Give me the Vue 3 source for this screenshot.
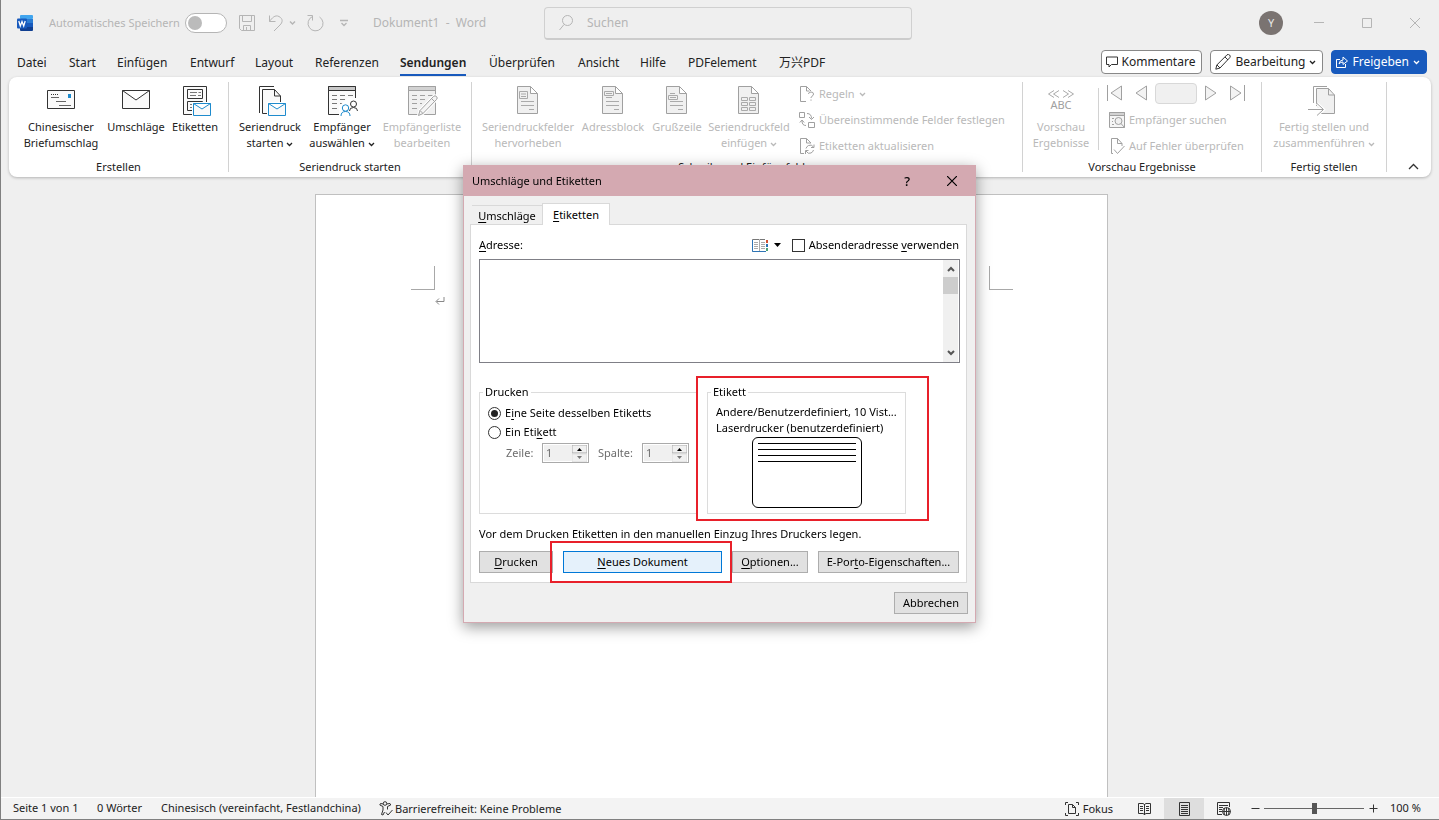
<script setup>
import { ref } from 'vue'

const tabs = ['Datei', 'Start', 'Einfügen', 'Entwurf', 'Layout', 'Referenzen', 'Sendungen', 'Überprüfen', 'Ansicht', 'Hilfe', 'PDFelement', '万兴PDF']
const active = ref('Sendungen')
const mode = ref('page')
const zoom = ref(50)
const address = ref('')
</script>

<template>
  <div class="window">
    <header class="titlebar">
      <div class="title-left">
        <svg class="logo" width="16" height="16" viewBox="0 0 16 16">
          <rect x="3" width="13" height="4" rx="1" fill="#41a5ee" />
          <path d="M3 4h13v4H3z" fill="#2b7cd3" />
          <path d="M3 8h13v4H3z" fill="#185abd" />
          <path d="M3 12h13v3a1 1 0 0 1-1 1H4a1 1 0 0 1-1-1z" fill="#103f91" />
          <rect y="3.500" width="10" height="10" rx="1" fill="#185abd" />
          <path d="M1.800 6l1.500 5L5 6.500 6.700 11 8.200 6" fill="none" stroke="#fff" stroke-width="1.300" />
        </svg>
        <label class="autosave">Automatisches Speichern<input type="checkbox" class="switch" /></label>
        <button class="plain save" aria-label="Speichern">
          <svg width="16" height="16" viewBox="0 0 16 16" class="pale"><path d="M.5.5h15v15h-13l-2-2zM3.500.5v6h9v-6M4.500 15.500v-5h7v5M7.500 12v3" /></svg>
        </button>
        <button class="plain undo" aria-label="Rückgängig">
          <svg width="28" height="17" viewBox="0 0 28 17" class="pale"><path d="M1.500.5v6h6M1.500 6.500C4 3 7-.5 11 1.500c4.500 2.500 3.500 6 1 8.500l-6 6" /><path d="M22 6.500l2.500 2.500L27 6.500" stroke-width="1.400" /></svg>
        </button>
        <button class="plain redo" aria-label="Wiederholen">
          <svg width="17" height="17" viewBox="0 0 17 17" class="pale"><path d="M.5.5h5v5M5.500 1.500a7.500 7.500 0 1 0 7 .5" /></svg>
        </button>
        <button class="plain more" aria-label="Anpassen">
          <svg width="8" height="8" viewBox="0 0 8 8" class="pale"><path d="M0 1.500h8M1.500 4L4 6.500 6.500 4" stroke-width="1.300" /></svg>
        </button>
        <span class="doc-name">Dokument1&nbsp; -&nbsp; Word</span>
      </div>
      <label class="search">
        <svg width="14" height="16" viewBox="0 0 14 16" class="pale"><circle cx="8.500" cy="5.500" r="5" /><path d="M5 9.500L.5 15" /></svg>
        <input type="text" placeholder="Suchen" aria-label="Suchen" />
      </label>
      <div class="title-right">
        <button class="avatar">Y</button>
        <button class="plain" aria-label="Minimieren"><svg width="10" height="10" viewBox="0 0 10 10" class="pale"><path d="M0 4.500h10" /></svg></button>
        <button class="plain" aria-label="Maximieren"><svg width="10" height="10" viewBox="0 0 10 10" class="pale"><path d="M.5.5h9v9h-9z" /></svg></button>
        <button class="plain" aria-label="Schließen"><svg width="10" height="10" viewBox="0 0 10 10" class="pale"><path d="M0 0l10 10M10 0L0 10" /></svg></button>
      </div>
    </header>

    <div class="tabbar">
      <nav class="tabs">
        <button v-for="t in tabs" :key="t" class="tab" :class="{ on: t === active }" @click="active = t"><span>{{ t }}</span></button>
      </nav>
      <div class="actions">
        <button class="action">
          <svg width="12" height="12" viewBox="0 0 12 12" class="ink"><path d="M.5 1h11v7.500H5.500L3 11V8.500H.5z" /></svg>
          Kommentare
        </button>
        <button class="action">
          <svg width="16" height="16" viewBox="0 0 16 16" class="ink"><path d="M.8 15.200l1-4.200L12 .8q1.500-1 2.600.2 1.200 1.200.2 2.600L5 14zM10 3l3 3M2 11l3 3" /></svg>
          Bearbeitung
          <svg class="chev" width="7" height="5" viewBox="0 0 7 5"><path d="M1 1l2.500 2.500L6 1" /></svg>
        </button>
        <button class="action share">
          <svg width="12" height="12" viewBox="0 0 12 12"><path d="M4 3.500H.5v8h9V8M3 8q.5-4 4-4V1l4.500 4L7 8.500V6Q4.500 6 3 8z" /></svg>
          Freigeben
          <svg class="chev" width="7" height="5" viewBox="0 0 7 5"><path d="M1 1l2.500 2.500L6 1" /></svg>
        </button>
      </div>
    </div>

    <section class="ribbon">
      <div class="group create">
        <div class="tools">
          <button class="big w80">
            <svg class="ink" viewBox="0 0 32 32"><path d="M2.500 6.500h27v18h-27z" fill="#fafafa" /><path d="M6 10.500h8" stroke-dasharray="1 1" /><path d="M6 13.500h8M11 17.500h10M14 21.500h12" stroke="#666" /><path d="M23 10h3v4h-3z" fill="#1e8bcd" stroke="none" /></svg>
            Chinesischer<br />Briefumschlag
          </button>
          <button class="big w70">
            <svg class="ink" viewBox="0 0 32 32"><path d="M2.500 6.500h27v18h-27zl13.500 9.500 13.500-9.500" fill="#fafafa" /></svg>
            Umschläge
          </button>
          <button class="big w48">
            <svg class="ink" viewBox="0 0 32 32"><path d="M4.500 2.500h23v28h-23z" fill="#fafafa" /><path d="M8.500 5.500h15v9h-15zM8.500 17.500h15v9h-15z" /><path d="M11 8.500h7m1.500 0H22M11 11.500h6m2 0h3M11 20.500h3M11 23.500h3" stroke="#777" /><path d="M13 18h19v14H13z" fill="#fff" stroke="none" /><path d="M14.500 19.500h17v12h-17zl8.500 5.500 8.500-5.500" fill="#fafafa" stroke="#1e8bcd" /></svg>
            Etiketten
          </button>
        </div>
        <h2>Erstellen</h2>
      </div>

      <div class="group merge">
        <div class="tools">
          <button class="big w68">
            <svg class="ink" viewBox="0 0 32 32"><path d="M5.500 29V2.500H20" /><path d="M8.500 30V5.500h12l6 6.500v18z" fill="#fafafa" stroke="none" /><path d="M14 29.500H8.500v-24h12l6 6.500v7M20.500 5.500V12h6" /><path d="M13 18h19v14H13z" fill="#fff" stroke="none" /><path d="M14.500 19.500h17v12h-17zl8.500 5.500 8.500-5.500" fill="#fafafa" stroke="#1e8bcd" /></svg>
            Seriendruck<br />starten <svg class="chev" width="7" height="5" viewBox="0 0 7 5"><path d="M1 1l2.500 2.500L6 1" /></svg>
          </button>
          <button class="big w76">
            <svg class="ink" viewBox="0 0 32 32"><path d="M2.500 2.500h27v28h-27z" fill="#fafafa" /><path d="M2.500 2.500h27v4h-27z" fill="#c8c8c8" /><path d="M6 11.500h5m3 0h5m3 0h5M6 15.500h5m3 0h5m3 0h5M6 19.500h5m3 0h5M6 24.500h5" stroke="#777" /><path d="M13 32V22l9-8h10v18z" fill="#fff" stroke="none" /><circle cx="27.500" cy="20" r="3" /><path d="M23.500 27q0-3.500 4-3.500t4 3.500" /><circle cx="19.500" cy="24" r="3.200" stroke="#1e8bcd" /><path d="M15 32q0-4.500 4.500-4.500T24 32" stroke="#1e8bcd" /></svg>
            Empfänger<br />auswählen <svg class="chev" width="7" height="5" viewBox="0 0 7 5"><path d="M1 1l2.500 2.500L6 1" /></svg>
          </button>
          <button class="big w84" disabled>
            <svg class="dim" viewBox="0 0 32 32"><path d="M2.500 2.500h27v28h-27z" fill="#f0f0f0" /><path d="M2.500 2.500h27v4h-27z" fill="#d2d2d2" /><path d="M6 11.500h5m3 0h5m3 0h5M6 15.500h5m3 0h5M6 19.500h5m3 0h2M6 24.500h5" /><path d="M12.500 31.500l1.500-5L27.500 12.500q1.500-1.500 3 0t0 3L17 29.500z" fill="#f5f5f5" stroke="#fff" stroke-width="3" /><path d="M12.500 31.500l1.500-5L27.500 12.500q1.500-1.500 3 0t0 3L17 29.500zM25.500 14.500l3 3M14 26.500l3 3" fill="#f5f5f5" /></svg>
            Empfängerliste<br />bearbeiten
          </button>
        </div>
        <h2>Seriendruck starten</h2>
      </div>

      <div class="group fields">
        <div class="tools">
          <button class="big w98" disabled>
            <svg class="dim" viewBox="0 0 32 32"><path d="M5.500 2.500h13l7 7v20h-20zM18.500 2.500v7h7" fill="#f0f0f0" /><path d="M7.500 7.500h8v7h-8zM9 10h5M9 12.500h5M9 17.500h13M9 21.500h13M17 25.500h5" stroke="#aaa" /></svg>
            Seriendruckfelder<br />hervorheben
          </button>
          <button class="big w72" disabled>
            <svg class="dim" viewBox="0 0 32 32"><path d="M5.500 2.500h13l7 7v20h-20zM18.500 2.500v7h7" fill="#f0f0f0" /><path d="M7.500 7.500h9v4h-9zM9 9.500h6M9 13.500h6M9 17.500h13M9 21.500h13M17 25.500h5" stroke="#aaa" /></svg>
            Adressblock
          </button>
          <button class="big w56" disabled>
            <svg class="dim" viewBox="0 0 32 32"><path d="M5.500 2.500h13l7 7v20h-20zM18.500 2.500v7h7" fill="#f0f0f0" /><path d="M9 9.500h5M7.500 11.500h9v4h-9zM9 13.500h6M9 17.500h13M9 21.500h13M17 25.500h5" stroke="#aaa" /></svg>
            Grußzeile
          </button>
          <button class="big w88" disabled>
            <svg class="dim" viewBox="0 0 32 32"><path d="M5.500 2.500h13l7 7v20h-20zM18.500 2.500v7h7" fill="#f0f0f0" /><path d="M8.500 13.500h6v3h-6zM16.500 13.500h6v3h-6zM8.500 18.500h6v3h-6zM16.500 18.500h6v3h-6zM8.500 23.500h6v3h-6zM16.500 23.500h6v3h-6z" stroke="#aaa" /></svg>
            Seriendruckfeld<br />einfügen <svg class="chev" width="7" height="5" viewBox="0 0 7 5"><path d="M1 1l2.500 2.500L6 1" /></svg>
          </button>
          <div class="rows">
            <button class="row" disabled>
              <svg class="dim" viewBox="0 0 16 16"><path d="M7 15.500H1.500V.5h6L12 5M7.500.5V5h3" /><path d="M9.500 8q0-2 2.500-2t2.500 2q0 1.500-1.500 2.200-1 .6-1 1.800M12 13.500v1.200" /></svg>
              Regeln <svg class="chev" width="7" height="5" viewBox="0 0 7 5"><path d="M1 1l2.500 2.500L6 1" /></svg>
            </button>
            <button class="row" disabled>
              <svg class="dim" viewBox="0 0 16 16"><path d="M.5.5h5v5h-5zM9.500 10.500h6v5h-6zM8 1.500q4.500 0 4.500 5M10 5l2.500 2.500L15 5M7 13.500q-4 0-4-4.500M.8 10.500L3 8l2.200 2.500" /></svg>
              Übereinstimmende Felder festlegen
            </button>
            <button class="row" disabled>
              <svg class="dim" viewBox="0 0 16 16"><path d="M5 15.500H1.500V.5h6L12 5M7.500.5V5H12M14.500 9Q12.500 6 9.500 7.500 7.500 8.500 7 10.500M15 6.500v3h-3M7 13q2 3.500 5 2 2-1 2.500-3M6.500 16v-3.500h3" /></svg>
              Etiketten aktualisieren
            </button>
          </div>
        </div>
        <h2>Schreib- und Einfügefelder</h2>
      </div>

      <div class="group preview">
        <div class="tools">
          <button class="big w64" disabled>
            <svg class="dim" viewBox="0 0 32 32"><path d="M9 6.500L3.500 10 9 13.500M14 6.500L8.500 10l5.500 3.500M18 6.500l5.500 3.500-5.500 3.500M23 6.500l5.500 3.500-5.500 3.500" stroke="#aaa" /><text x="16" y="25" text-anchor="middle" class="abc">ABC</text></svg>
            Vorschau<br />Ergebnisse
          </button>
          <div class="rows split">
            <div class="nav">
              <button class="plain" disabled aria-label="Erster Datensatz"><svg class="dim" width="16" height="16" viewBox="0 0 16 16"><path d="M.5 0v16M14.500 1v14L4 8z" fill="#f3f3f3" /></svg></button>
              <button class="plain" disabled aria-label="Vorheriger Datensatz"><svg class="dim" width="12" height="16" viewBox="0 0 12 16"><path d="M11.500 1v14L1 8z" fill="#f3f3f3" /></svg></button>
              <input type="text" disabled aria-label="Datensatz" />
              <button class="plain" disabled aria-label="Nächster Datensatz"><svg class="dim" width="12" height="16" viewBox="0 0 12 16"><path d="M.5 1v14L11 8z" fill="#f3f3f3" /></svg></button>
              <button class="plain" disabled aria-label="Letzter Datensatz"><svg class="dim" width="16" height="16" viewBox="0 0 16 16"><path d="M1.500 1v14L12 8zM15.500 0v16" fill="#f3f3f3" /></svg></button>
            </div>
            <button class="row" disabled>
              <svg class="dim" viewBox="0 0 16 16"><path d="M.5.5h15v15H.5z" fill="#f5f5f5" /><path d="M.5.5h15v3H.5z" fill="#d2d2d2" /><path d="M3 6.500h2M3 9.500h1M3 12.500h2" /><circle cx="9.500" cy="9" r="3.500" fill="#f0f0f0" /><path d="M12 11.500l3.500 4" /></svg>
              Empfänger suchen
            </button>
            <button class="row" disabled>
              <svg class="dim" viewBox="0 0 16 16"><path d="M4 15.500H2.500V.5h6l4.500 5V8M8.500.5v5H13M5 11.500l3.500 4L15.500 8" /></svg>
              Auf Fehler überprüfen
            </button>
          </div>
        </div>
        <h2>Vorschau Ergebnisse</h2>
      </div>

      <div class="group finish">
        <div class="tools">
          <button class="big" disabled>
            <svg class="dim" viewBox="0 0 32 32"><path d="M5.500 19V2.500H19" /><path d="M12 29.500h14.500V11l-6-6.500H8.500V22" fill="#f0f0f0" /><path d="M20.500 4.500V11h6" /><path d="M0 25.500h15M9 19.500l6.500 6L9 31.500" stroke="#fff" stroke-width="3" /><path d="M0 25.500h15M9 19.500l6.500 6L9 31.500" /></svg>
            Fertig stellen und<br />zusammenführen <svg class="chev" width="7" height="5" viewBox="0 0 7 5"><path d="M1 1l2.500 2.500L6 1" /></svg>
          </button>
        </div>
        <h2>Fertig stellen</h2>
      </div>

      <button class="plain collapse" aria-label="Menüband reduzieren"><svg class="ink" width="11" height="7" viewBox="0 0 11 7"><path d="M1 6l4.500-4.500L10 6" stroke-width="1.300" /></svg></button>
    </section>

    <main class="canvas">
      <article class="page">
        <div class="marks"><i class="mark left"></i><i class="mark right"></i></div>
        <svg class="return" width="10" height="8" viewBox="0 0 10 8"><path d="M9 0v4.500H1.500M4 1.500l-3 3 3 3" /></svg>
      </article>
    </main>

    <footer class="status">
      <span class="s-page">Seite 1 von 1</span>
      <span class="s-words">0 Wörter</span>
      <span class="s-lang">Chinesisch (vereinfacht, Festlandchina)</span>
      <button class="plain s-access">
        <svg class="ink" width="14" height="15" viewBox="0 0 14 15"><circle cx="6" cy="2.500" r="1.800" /><path d="M4.500 3L1.500 2.500.8 4 4 5.500V9l-1.500 4.500L4 14l1.500-3M7.500 3l3.500-.5.700 1.500L8.500 5.500v3M7 11.500L9 14l4.500-5" /></svg>
        Barrierefreiheit: Keine Probleme
      </button>
      <div class="status-right">
        <button class="plain focus">
          <svg class="ink" width="14" height="14" viewBox="0 0 14 14"><path d="M3 .5H.5V3M11 .5h2.500V3M.5 11v2.500H3M13.500 11v2.500H11M3.500 2.500h4l3 3v6h-7zM7.500 2.500v3h3" /></svg>
          Fokus
        </button>
        <button class="mode" :class="{ on: mode === 'read' }" aria-label="Lesemodus" @click="mode = 'read'">
          <svg class="ink" width="13" height="14" viewBox="0 0 13 14"><path d="M6.500 2v11M.5 1.500h4.500l1.500 1 1.500-1h4.500v10H8l-1.500 1-1.500-1H.5z" /><path d="M2 4.500h3M2 6.500h3M2 8.500h3M8 4.500h3M8 6.500h3M8 8.500h3" /></svg>
        </button>
        <button class="mode" :class="{ on: mode === 'page' }" aria-label="Seitenlayout" @click="mode = 'page'">
          <svg class="ink" width="11" height="14" viewBox="0 0 11 14"><path d="M.5.5h10v13H.5zM2 3.500h7M2 5.500h7M2 7.500h7M2 9.500h7M2 11.500h7" /></svg>
        </button>
        <button class="mode" :class="{ on: mode === 'web' }" aria-label="Weblayout" @click="mode = 'web'">
          <svg class="ink" width="14" height="14" viewBox="0 0 14 14"><path d="M5 12.500H.5V.5h12V5M2 3.500h9M2 5.500h4M2 7.500h3M2 9.500h3" /><circle cx="9.500" cy="9.500" r="4" /><path d="M5.500 9.500h8M9.500 5.500v8M7.500 6q-1 3.500 0 7M11.500 6q1 3.500 0 7" /></svg>
        </button>
        <button class="plain step minus" aria-label="Verkleinern"><svg class="ink" width="9" height="9" viewBox="0 0 9 9"><path d="M.5 4.500h8" /></svg></button>
        <input v-model="zoom" class="zoom" type="range" min="0" max="100" aria-label="Zoom" />
        <button class="plain step" aria-label="Vergrößern"><svg class="ink" width="9" height="9" viewBox="0 0 9 9"><path d="M.5 4.500h8M4.500.5v8" /></svg></button>
        <span class="percent">100 %</span>
      </div>
    </footer>

    <div class="overlay">
      <div class="dialog" role="dialog" aria-labelledby="dlg-title">
        <div class="dlg-bar">
          <h1 id="dlg-title">Umschläge und Etiketten</h1>
          <button class="plain help" aria-label="Hilfe">?</button>
          <button class="plain" aria-label="Schließen"><svg width="10" height="10" viewBox="0 0 10 10" stroke="#000" stroke-width="1.200"><path d="M0 0l10 10M10 0L0 10" /></svg></button>
        </div>
        <div class="dlg-body">
          <div class="dlg-tabs">
            <button class="dlg-tab first"><u>U</u>mschläge</button>
            <button class="dlg-tab current"><u>E</u>tiketten</button>
          </div>
          <div class="panel">
            <div class="address-head">
              <label for="address"><u>A</u>dresse:</label>
              <button class="plain book" aria-label="Adressbuch">
                <svg width="16" height="13" viewBox="0 0 16 13" fill="none"><path d="M.5 12.500V.5H7l.5.5.5-.5h5" stroke="#777" /><path d="M.5 1v11.500H14" stroke="#2e74b5" /><path d="M7.500 1v11" stroke="#aaa" /><path d="M2 3.500h4M2 5.500h4M2 7.500h4M2 9.500h4M9 3.500h4M9 5.500h4M9 7.500h4M9 9.500h4" stroke="#aaa" /><path d="M14 1h2v3h-2z" fill="#d35230" /><path d="M14 5h2v3h-2z" fill="#2e74b5" /><path d="M14 9h2v3h-2z" fill="#4ea278" /></svg>
                <svg width="7" height="4" viewBox="0 0 7 4"><path d="M0 0h7L3.500 4z" fill="#000" /></svg>
              </button>
              <label class="check"><input type="checkbox" /><span>Absenderadresse <u>v</u>erwenden</span></label>
            </div>
            <div class="address-box">
              <textarea id="address" v-model="address"></textarea>
              <div class="scrollbar" aria-hidden="true">
                <svg width="8" height="6" viewBox="0 0 8 6"><path d="M1 5l3-3 3 3" /></svg>
                <i></i>
                <svg width="8" height="6" viewBox="0 0 8 6"><path d="M1 1l3 3 3-3" /></svg>
              </div>
            </div>
            <div class="boxes">
              <fieldset class="print">
                <legend>Drucken</legend>
                <label class="radio"><input type="radio" name="scope" checked /><span>E<u>i</u>ne Seite desselben Etiketts</span></label>
                <label class="radio"><input type="radio" name="scope" /><span>Ein Eti<u>k</u>ett</span></label>
                <div class="position">
                  <label for="zeile">Zeile:</label>
                  <span class="spin"><input id="zeile" type="text" value="1" disabled /><svg width="15" height="17" viewBox="0 0 15 17"><path d="M0 0h15v8H0z" fill="#f0f0f0" stroke="#aaa" /><path d="M0 9h15v8H0z" fill="#f0f0f0" stroke="#ddd" /><path d="M5 6h5L7.500 3z" fill="#000" /><path d="M5 11h5l-2.500 3z" fill="#777" /></svg></span>
                  <label for="spalte">Spalte:</label>
                  <span class="spin"><input id="spalte" type="text" value="1" disabled /><svg width="15" height="17" viewBox="0 0 15 17"><path d="M0 0h15v8H0z" fill="#f0f0f0" stroke="#aaa" /><path d="M0 9h15v8H0z" fill="#f0f0f0" stroke="#ddd" /><path d="M5 6h5L7.500 3z" fill="#000" /><path d="M5 11h5l-2.500 3z" fill="#777" /></svg></span>
                </div>
              </fieldset>
              <div class="label-wrap">
                <fieldset class="label">
                  <legend>Etikett</legend>
                  <p>Andere/Benutzerdefiniert, 10 Vist...</p>
                  <p>Laserdrucker (benutzerdefiniert)</p>
                  <div class="sticker"><i></i><i></i><i></i><i></i></div>
                </fieldset>
                <span class="callout around-label"></span>
              </div>
            </div>
            <p class="hint">Vor dem Drucken Etiketten in den manuellen Einzug Ihres Druckers legen.</p>
            <div class="buttons">
              <button class="btn b-print"><span><u>D</u>rucken</span></button>
              <div class="new-wrap">
                <button class="btn b-new"><span><u>N</u>eues Dokument</span></button>
                <span class="callout around-new"></span>
              </div>
              <button class="btn b-opt"><span><u>O</u>ptionen...</span></button>
              <button class="btn b-porto"><span>E-Por<u>t</u>o-Eigenschaften...</span></button>
            </div>
          </div>
          <div class="dlg-foot"><button class="btn cancel">Abbrechen</button></div>
        </div>
      </div>
    </div>
  </div>
</template>

<style>
body { margin: 0; }
</style>

<style scoped>
* { box-sizing: border-box; }
.window {
  min-height: 100vh;
  display: flex;
  flex-direction: column;
  background: #efefef;
  border-left: 1px solid #808080;
  border-bottom: 1px solid #808080;
  font-family: "Noto Sans", "Noto Sans CJK SC", sans-serif;
  font-size: 12px;
  line-height: 16px;
  color: #222;
}
button, input, textarea { font: inherit; color: inherit; }
button { margin: 0; padding: 0; border: 0; background: none; white-space: nowrap; }
svg { display: block; flex: none; }
.plain { display: flex; align-items: center; }
.pale { fill: none; stroke: #b5b5b5; }
.ink { fill: none; stroke: #333; }
.dim { fill: none; stroke: #a0a0a0; }

.titlebar { display: grid; grid-template-columns: 543fr 368px 527fr; align-items: center; height: 46px; color: #b5b5b5; }
.title-left { display: flex; align-items: center; padding-left: 16px; }
.autosave { display: flex; align-items: center; width: 178px; margin-left: 16px; justify-content: space-between; white-space: nowrap; font-size: 11px; }
.switch { appearance: none; width: 42px; height: 20px; margin: 0; border: 1px solid #b5b5b5; border-radius: 10px; background: #fff; display: flex; align-items: center; padding-left: 2px; }
.switch::before { content: ""; width: 14px; height: 14px; border-radius: 50%; background: #bbb; }
.save { margin-left: 12px; }
.undo { margin-left: 13px; }
.redo { margin-left: 11px; }
.more { margin-left: 16px; }
.doc-name { margin-left: 25px; white-space: nowrap; }
.search { display: flex; align-items: center; gap: 14px; height: 33px; padding-left: 14px; border: 1px solid #d0d0d0; border-bottom: 2px solid #ccc; border-radius: 4px; }
.search input { flex: 1; min-width: 0; border: 0; outline: 0; background: none; padding: 0; }
.search input::placeholder { color: #b5b5b5; opacity: 1; }
.title-right { display: flex; align-items: center; justify-content: flex-end; gap: 38px; padding-right: 19px; }
.avatar { width: 24px; height: 24px; border-radius: 50%; background: #7a7371; color: #e8e8e8; font-size: 11px; margin-right: -7px; }

.tabbar { display: flex; justify-content: space-between; height: 31px; padding: 4px 12px 0 16px; }
.tabs { display: grid; grid-template-columns: 52px 48px 73px 65px 60px 85px 89px 89px 62px 48px 91px auto; align-items: start; }
.tab { justify-self: start; font-size: 12px; line-height: 22px; padding-top: 2px; }
.tab span { display: block; }
.tab.on { font-weight: 600; }
.tab.on span { border-bottom: 2px solid #185abd; }
.actions { display: flex; gap: 8px; }
.action { display: flex; align-items: center; height: 24px; gap: 4px; padding: 0 6px 0 4px; border: 1px solid #888; border-radius: 4px; background: #fff; }
.action.share { background: #185abd; border-color: #185abd; color: #fff; }
.share svg { fill: none; stroke: #fff; }
.chev { fill: none; stroke: currentColor; stroke-width: 1.300; }

.ribbon { display: grid; grid-template-columns: 220px 243px 551px 239px 125px 1fr; min-height: 100px; margin: 0 8px; padding-top: 5px; border-radius: 8px; background: #fff; box-shadow: 0 1px 3px rgba(0, 0, 0, .25); font-size: 11px; }
.group { display: flex; flex-direction: column; justify-content: space-between; height: 90px; border-right: 1px solid #d2d2d2; }
.group h2 { margin: 0; font-size: 11px; line-height: 10px; font-weight: 400; text-align: center; }
.tools { display: flex; align-items: flex-start; padding-top: 2px; }
.create .tools { padding-left: 12px; }
.merge .tools, .fields .tools { padding-left: 7px; }
.preview .tools { padding-left: 6px; }
.finish .tools { justify-content: center; }
.big { text-align: center; }
.big > svg:first-child { width: 32px; height: 32px; margin: 0 auto 3px; }
.big .chev, .row .chev { display: inline-block; vertical-align: middle; }
.w80 { width: 80px; } .w70 { width: 70px; } .w48 { width: 48px; } .w68 { width: 68px; } .w76 { width: 76px; } .w84 { width: 84px; }
.w98 { width: 98px; } .w72 { width: 72px; } .w56 { width: 56px; } .w88 { width: 88px; } .w64 { width: 64px; }
button:disabled { color: #b9b9b9; }
.rows { display: flex; flex-direction: column; gap: 10px; padding: 2px 0 0 6px; }
.row { display: flex; align-items: center; gap: 4px; height: 16px; }
.row > svg:first-child { width: 16px; height: 16px; }
.split { position: relative; margin-left: 5px; padding: 0 0 0 9px; gap: 10px; }
.split::before { content: ""; position: absolute; left: 0; top: 4px; height: 62px; border-left: 1px solid #d2d2d2; }
.split .row { padding-left: 2px; }
.nav { display: flex; align-items: center; height: 18px; gap: 8px; }
.nav input { width: 42px; height: 21px; border: 1px solid #d8d8d8; border-radius: 4px; background: #f0f0f0; padding: 0; }
.nav button:nth-child(2) { margin-left: 4px; }
.nav button:last-child { margin-left: 4px; }
.abc { font-size: 11px; fill: #a0a0a0; stroke: none; }
.collapse { align-self: end; justify-self: end; padding: 0 12px 7px 0; }

.canvas { flex: 1; display: flex; justify-content: center; padding: 17px 18px 0 0; }
.page { flex: 0 1 793px; background: #fff; border: 1px solid #c0c0c0; border-bottom: 0; padding: 71px 94px 0 95px; }
.marks { display: flex; justify-content: space-between; }
.mark { width: 24px; height: 24px; border-bottom: 1px solid #a8a8a8; }
.mark.left { border-right: 1px solid #a8a8a8; }
.mark.right { border-left: 1px solid #a8a8a8; }
.return { margin: 7px 0 0 24px; fill: none; stroke: #888; }

.status { display: flex; align-items: center; height: 22px; padding: 0 19px 0 12px; background: #f3f3f3; border-top: 1px solid #fff; font-size: 11px; white-space: nowrap; }
.s-page { width: 84px; } .s-words { width: 64px; } .s-lang { width: 218px; }
.status span { padding-bottom: 2px; }
.s-access { gap: 2px; }
.status-right { display: flex; align-items: center; margin-left: auto; align-self: stretch; }
.focus { gap: 4px; margin-right: 11px; }
.mode { width: 40px; height: 21px; display: flex; align-items: center; justify-content: center; }
.mode.on { background: #dedede; }
.step { margin: 0 4px 0 5px; }
.minus { margin-left: 7px; }
.zoom { appearance: none; width: 100px; height: 12px; margin: 0; background: linear-gradient(#666, #666) center / 100% 1px no-repeat; }
.zoom::-webkit-slider-thumb { appearance: none; width: 5px; height: 11px; background: #555; }
.percent { width: 30px; margin-left: 8px; }

.overlay { position: fixed; inset: 0; display: flex; justify-content: center; align-items: flex-start; padding-top: 165px; pointer-events: none; }
.dialog { pointer-events: auto; width: 513px; border: 1px solid #d4a9b1; background: #f0f0f0; box-shadow: 0 4px 14px rgba(0, 0, 0, .4); font-size: 11px; color: #000; }
.dlg-bar { display: flex; align-items: center; height: 30px; padding: 0 18px 0 8px; background: #d4a9b1; }
.dlg-bar h1 { flex: 1; margin: 0; font-size: 11px; font-weight: 400; }
.help { margin-right: 37px; font-size: 13px; font-weight: 500; }
.dlg-body { padding: 7px 8px 8px 6px; }
.dlg-tabs { display: flex; align-items: flex-end; padding-left: 2px; }
.dlg-tab { border: 1px solid #d9d9d9; border-bottom: 0; }
.first { width: 70px; height: 19px; border-width: 1px 0 0; padding-top: 1px; }
.current { position: relative; width: 68px; height: 22px; margin-bottom: -1px; background: #fff; }
.panel { border: 1px solid #d9d9d9; background: #fff; padding: 12px 6px 9px 8px; }
.address-head { display: flex; align-items: center; height: 16px; }
.book { gap: 6px; margin-left: auto; }
.check { display: flex; align-items: center; gap: 4px; margin: 0 1px 0 11px; }
.check input { appearance: none; width: 13px; height: 13px; margin: 0; border: 1px solid #333; background: #fff; }
.address-box { display: flex; height: 104px; margin-top: 6px; border: 1px solid #7f7f86; }
.address-box textarea { flex: 1; border: 0; outline: 0; resize: none; padding: 4px; overflow: hidden; }
.scrollbar { width: 15px; margin-right: 1px; background: #f0f0f0; display: flex; flex-direction: column; align-items: center; padding: 6px 0; }
.scrollbar svg { fill: none; stroke: #555; stroke-width: 2; }
.scrollbar i { width: 15px; height: 17px; margin: 5px 0 auto; background: #cdcdcd; }
.boxes { display: flex; gap: 9px; margin-top: 21px; }
fieldset { margin: 0; min-width: 0; height: 130px; border: 1px solid #dcdcdc; padding: 4px 8px 0; }
legend { margin-left: -5px; padding: 0 2px; line-height: 16px; }
.print { width: 219px; padding-top: 5px; }
.radio { display: flex; align-items: center; gap: 4px; height: 16px; margin-bottom: 3px; }
.radio input { appearance: none; width: 13px; height: 13px; margin: 0; border: 1px solid #333; border-radius: 50%; background: #fff; display: grid; place-items: center; }
.radio input:checked::before { content: ""; width: 7px; height: 7px; border-radius: 50%; background: #222; }
.position { display: flex; align-items: center; margin: 3px 0 0 18px; color: #6d6d6d; }
.position label:first-child { width: 36px; }
.position label:nth-of-type(2) { width: 44px; margin-left: 9px; }
.spin { display: flex; align-items: center; width: 47px; height: 20px; border: 1px solid #aaa; padding: 1px; background: #fff; }
.spin input { width: 28px; height: 16px; border: 0; padding: 0 2px; background: #f0f0f0; color: #6d6d6d; }
.label-wrap { position: relative; width: 199px; }
.label p { margin: 0; white-space: nowrap; }
.callout { position: absolute; border: 2px solid #e8202a; pointer-events: none; }
.around-label { inset: -8px -23px -7px -11px; }
.sticker { width: 110px; height: 71px; margin: 1px 0 0 36px; border: 1px solid #000; border-radius: 6px; padding: 5px; }
.sticker i { display: block; height: 1px; margin-bottom: 5px; background: #000; }
.hint { margin: 12px 0 9px; line-height: 16px; white-space: nowrap; }
.buttons { display: flex; gap: 10px; }
.btn { height: 22px; border: 1px solid #adadad; background: #e1e1e1; }
.b-print { width: 74px; }
.new-wrap { position: relative; }
.b-new { width: 159px; border-color: #0078d7; background: #e5f1fb; }
.around-new { inset: -10px; top: -10px; left: -13px; }
.b-opt { width: 76px; }
.b-porto { width: 141px; }
.dlg-foot { display: flex; justify-content: flex-end; margin: 9px -1px 0 0; }
.cancel { width: 74px; }
u { text-underline-offset: 2px; }
</style>
